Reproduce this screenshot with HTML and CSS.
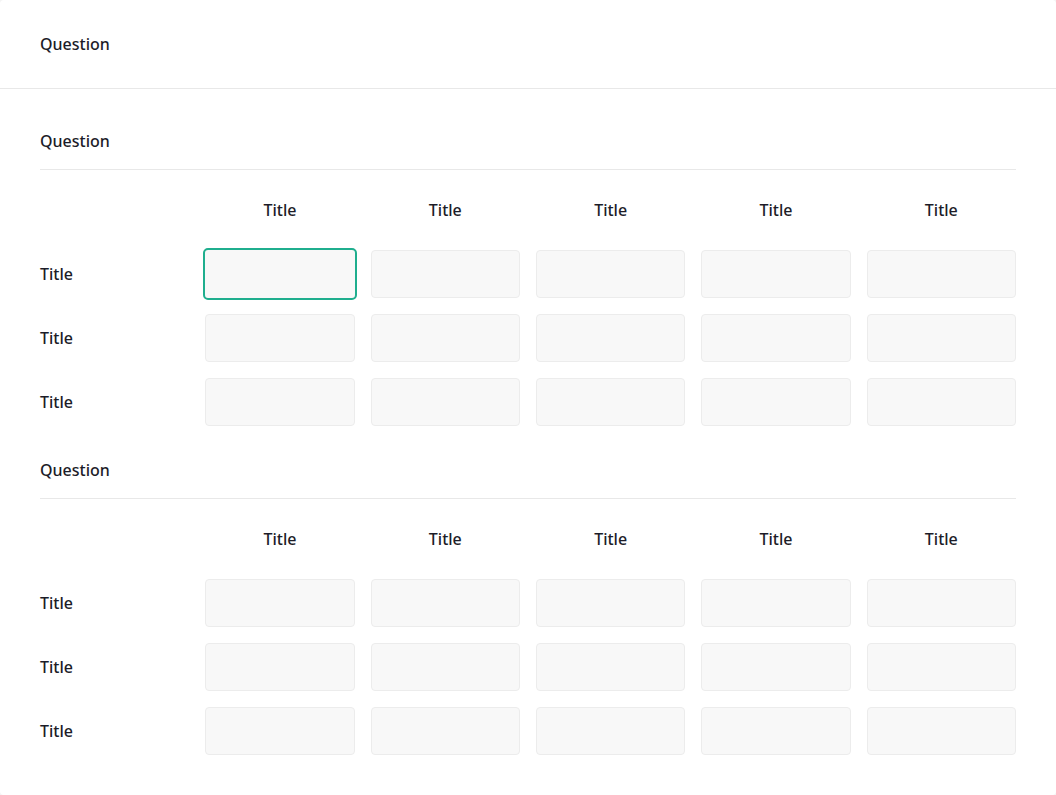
FILE: index.html
```html
<!DOCTYPE html>
<html>
<head>
<meta charset="utf-8">
<link rel="stylesheet" href="styles.css">
</head>
<body>
<div class="card">
  <div class="card-header">Question</div>
  <div class="card-body">
    <section class="section">
      <div class="section-title">Question</div>
      <div class="matrix">
        <div></div>
        <div class="col-head">Title</div>
        <div class="col-head">Title</div>
        <div class="col-head">Title</div>
        <div class="col-head">Title</div>
        <div class="col-head">Title</div>

        <div class="row-head">Title</div>
        <input class="cell focused" type="text">
        <input class="cell" type="text">
        <input class="cell" type="text">
        <input class="cell" type="text">
        <input class="cell" type="text">

        <div class="row-head">Title</div>
        <input class="cell" type="text">
        <input class="cell" type="text">
        <input class="cell" type="text">
        <input class="cell" type="text">
        <input class="cell" type="text">

        <div class="row-head">Title</div>
        <input class="cell" type="text">
        <input class="cell" type="text">
        <input class="cell" type="text">
        <input class="cell" type="text">
        <input class="cell" type="text">
      </div>
    </section>
    <section class="section">
      <div class="section-title">Question</div>
      <div class="matrix">
        <div></div>
        <div class="col-head">Title</div>
        <div class="col-head">Title</div>
        <div class="col-head">Title</div>
        <div class="col-head">Title</div>
        <div class="col-head">Title</div>

        <div class="row-head">Title</div>
        <input class="cell" type="text">
        <input class="cell" type="text">
        <input class="cell" type="text">
        <input class="cell" type="text">
        <input class="cell" type="text">

        <div class="row-head">Title</div>
        <input class="cell" type="text">
        <input class="cell" type="text">
        <input class="cell" type="text">
        <input class="cell" type="text">
        <input class="cell" type="text">

        <div class="row-head">Title</div>
        <input class="cell" type="text">
        <input class="cell" type="text">
        <input class="cell" type="text">
        <input class="cell" type="text">
        <input class="cell" type="text">
      </div>
    </section>
  </div>
</div>
</body>
</html>
```

FILE: styles.css
```css
html, body {
  margin: 0;
  padding: 0;
  background: #f4f4f4;
}
body {
  font-family: "Noto Sans", "Open Sans", sans-serif;
  font-size: 16px;
  font-weight: 500;
  color: #1c1c28;
}
.card {
  width: 1056px;
  height: 795px;
  background: #ffffff;
  border-radius: 4px;
  box-sizing: border-box;
  overflow: hidden;
}
.card-header {
  height: 88px;
  line-height: 88px;
  padding: 0 40px;
  border-bottom: 1px solid #e8e8e8;
}
.card-body {
  padding: 40px 40px 40px;
  display: flex;
  flex-direction: column;
  gap: 32px;
}
.section-title {
  line-height: 24px;
  padding-bottom: 16px;
  border-bottom: 1px solid #e8e8e8;
}
.matrix {
  margin-top: 16px;
  display: grid;
  grid-template-columns: repeat(6, 1fr);
  grid-auto-rows: 48px;
  gap: 16px;
  align-items: center;
}
.col-head {
  text-align: center;
}
.row-head {
  text-align: left;
}
.cell {
  display: block;
  box-sizing: border-box;
  width: 100%;
  height: 48px;
  margin: 0;
  padding: 0 12px;
  background: #f8f8f8;
  border: 1px solid #ececec;
  border-radius: 4px;
  outline: none;
  font: inherit;
}
.cell.focused {
  border: 2px solid #1fae8e;
  height: 52px;
  width: calc(100% + 4px);
  margin: -2px;
  border-radius: 5px;
}
```
